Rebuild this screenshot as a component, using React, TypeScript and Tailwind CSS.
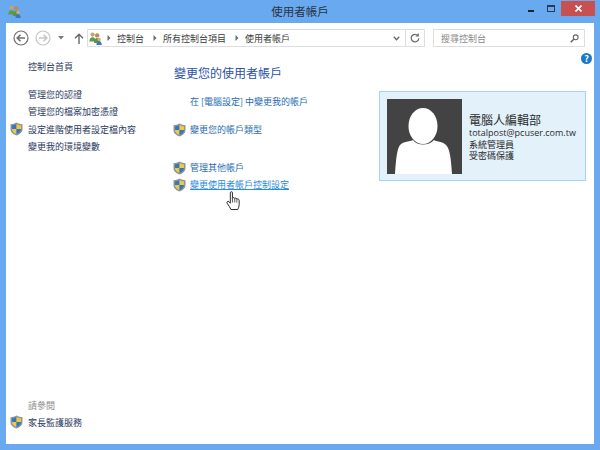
const cjk = "font-['Noto_Sans_CJK_TC','Noto_Sans',sans-serif]"

function Shield() {
  return (
    <svg width="13" height="14" viewBox="0 0 13 14" className="shrink-0">
      <path d="M6.5 0.5 C8.5 1.8 10.5 2.2 12.5 2.2 L12.5 7 C12.5 10.2 9.8 12.5 6.5 13.5 C3.2 12.5 0.5 10.2 0.5 7 L0.5 2.2 C2.5 2.2 4.5 1.8 6.5 0.5 Z" fill="#8f9499" />
      <path d="M6.5 2 L6.5 7 L2 7 L2 3.4 C3.6 3.3 5.1 2.9 6.5 2 Z" fill="#2f78c4" />
      <path d="M6.5 2 C7.9 2.9 9.4 3.3 11 3.4 L11 7 L6.5 7 Z" fill="#f2c93a" />
      <path d="M2 7 L6.5 7 L6.5 12 C4 11.2 2 9.4 2 7 Z" fill="#f2c93a" />
      <path d="M6.5 7 L11 7 C11 9.4 9 11.2 6.5 12 Z" fill="#2f78c4" />
    </svg>
  )
}

function Users() {
  return (
    <svg width="13" height="13" viewBox="0 0 13 13" className="shrink-0">
      <circle cx="3.6" cy="2.6" r="2.1" fill="#c9a26b" />
      <path d="M0.4 9.5 C0.4 6.6 1.8 5.2 3.6 5.2 C5.4 5.2 6.6 6.6 6.6 9.5 Z" fill="#5c9a45" />
      <circle cx="8.2" cy="3.4" r="2.2" fill="#b98d58" />
      <path d="M5 11 C5 7.6 6.4 6 8.2 6 C10 6 11.4 7.6 11.4 11 Z" fill="#5f8f4a" />
      <circle cx="10" cy="7.4" r="1.7" fill="#d2ad7c" />
      <path d="M7.4 13 C7.4 10.6 8.6 9.2 10 9.2 C11.4 9.2 12.8 10.6 12.8 13 Z" fill="#3f78b8" />
    </svg>
  )
}

function NavCircle({ muted }: { muted?: boolean }) {
  const c = muted ? '#c6c6c6' : '#6f6f6f'
  return (
    <svg width="16" height="16" viewBox="0 0 16 16" className="shrink-0">
      <circle cx="8" cy="8" r="7" fill="none" stroke={c} strokeWidth="1.2" />
      {muted ? (
        <path d="M4 8 H11.5 M8.5 4.8 L11.8 8 L8.5 11.2" fill="none" stroke={c} strokeWidth="1.6" />
      ) : (
        <path d="M12 8 H4.5 M7.5 4.8 L4.2 8 L7.5 11.2" fill="none" stroke={c} strokeWidth="1.6" />
      )}
    </svg>
  )
}

function Chevron() {
  return (
    <svg width="4" height="6" viewBox="0 0 4 6" className="shrink-0">
      <path d="M0.5 0 L3.5 3 L0.5 6 Z" fill="#6b6b6b" />
    </svg>
  )
}

function Crumb({ text }: { text: string }) {
  return (
    <>
      <Chevron />
      <span className="ml-[6px] mr-[9px] text-[9px] leading-none text-[#3a3a3a]">{text}</span>
    </>
  )
}

function SideLink({ text, shield }: { text: string; shield?: boolean }) {
  return (
    <div className="flex h-[17.5px] items-center">
      <div className="flex w-[22px] justify-end pr-[5px]">{shield && <Shield />}</div>
      <span className="text-[9px] leading-none text-[#2b3a5e]">{text}</span>
    </div>
  )
}

function MainLink({ text, shield, underline }: { text: string; shield?: boolean; underline?: boolean }) {
  return (
    <div className="flex h-[17px] items-center">
      <div className="w-[17px]">{shield && <Shield />}</div>
      <span className={`text-[9px] leading-none ${underline ? 'text-[#2a8ae0] underline' : 'text-[#1f6cb5]'}`}>{text}</span>
    </div>
  )
}

export default function App() {
  return (
    <div className={`flex h-[450px] w-[600px] flex-col overflow-hidden bg-[#69a9ef] ${cjk}`}>
      <div className="flex h-[23px] shrink-0 items-start">
        <div className="flex-1">
          <div className="ml-[8px] mt-[5px] w-[13px]"><Users /></div>
        </div>
        <div className="pt-[3px] text-center text-[11.5px] leading-[16px] text-[#2a3342]">使用者帳戶</div>
        <div className="flex flex-1 items-start justify-end">
          <div className="mr-[13px] mt-[10px] h-[2px] w-[6px] bg-[#1a2330]" />
          <div className="mr-[6px] mt-[5px] h-[7px] w-[8px] border border-t-[2px] border-[#2a3a55]" />
          <div className="mr-[5px] mt-[1px] flex h-[15px] w-[34px] items-center justify-center bg-[#c75050]">
            <svg width="7" height="7" viewBox="0 0 7 7">
              <path d="M0.5 0.5 L6.5 6.5 M6.5 0.5 L0.5 6.5" stroke="#fff" strokeWidth="1.6" />
            </svg>
          </div>
        </div>
      </div>

      <div className="relative mx-[6px] flex h-[421px] flex-col bg-white">
        <div className="flex h-[30px] shrink-0 items-center pl-[7px]">
          <NavCircle />
          <div className="ml-[6px]"><NavCircle muted /></div>
          <svg width="6" height="4" viewBox="0 0 6 4" className="ml-[7px]"><path d="M0 0 H6 L3 3.5 Z" fill="#7a7a7a" /></svg>
          <svg width="10" height="11" viewBox="0 0 10 11" className="ml-[10px]">
            <path d="M5 11 V1.5 M1 5.2 L5 1.2 L9 5.2" fill="none" stroke="#666" strokeWidth="1.4" />
          </svg>
          <div className="ml-[3px] flex h-[18px] w-[338px] items-center border border-[#dedede] pl-[1px]">
            <Users />
            <div className="ml-[5px] flex items-center">
              <Crumb text="控制台" />
              <Crumb text="所有控制台項目" />
              <Crumb text="使用者帳戶" />
            </div>
            <svg width="7" height="5" viewBox="0 0 7 5" className="ml-auto mr-[5px]"><path d="M0.8 0.8 L3.5 3.8 L6.2 0.8" fill="none" stroke="#666" strokeWidth="1.3" /></svg>
            <div className="flex h-full w-[19px] items-center justify-center border-l border-[#dedede]">
              <svg width="10" height="10" viewBox="0 0 10 10"><path d="M7.9 2.6 A3.8 3.8 0 1 0 8.8 5.4 M8.2 0.4 V3 H5.6" fill="none" stroke="#666" strokeWidth="1.2" /></svg>
            </div>
          </div>
          <div className="ml-[8px] flex h-[18px] w-[152px] items-center justify-between border border-[#dedede] pl-[7px] pr-[5px]">
            <span className="text-[9px] leading-none text-[#8a8a8a]">搜尋控制台</span>
            <svg width="9" height="9" viewBox="0 0 9 9"><circle cx="5.7" cy="3.3" r="2.4" fill="none" stroke="#666" strokeWidth="1.1" /><path d="M4 5 L0.8 8.2" stroke="#666" strokeWidth="1.6" /></svg>
          </div>
        </div>

        <div className="flex flex-1">
          <div className="flex w-[167px] shrink-0 flex-col pb-[13px] pt-[5px]">
            <SideLink text="控制台首頁" />
            <div className="mt-[10px]">
              <SideLink text="管理您的認證" />
              <SideLink text="管理您的檔案加密憑證" />
              <SideLink shield text="設定進階使用者設定檔內容" />
              <SideLink text="變更我的環境變數" />
            </div>
            <div className="mt-auto">
              <div className="flex h-[17px] items-center pl-[22px] text-[9px] leading-none text-[#8a8a8a]">請參閱</div>
              <SideLink shield text="家長監護服務" />
            </div>
          </div>

          <div className="flex w-[206px] shrink-0 flex-col pt-[11px]">
            <h1 className="pl-[1px] text-[12px] font-normal leading-[18px] text-[#2a52a8]">變更您的使用者帳戶</h1>
            <div className="mt-[11px]"><MainLink text="在 [電腦設定] 中變更我的帳戶" /></div>
            <div className="mt-[11px]"><MainLink shield text="變更您的帳戶類型" /></div>
            <div className="mt-[21px]"><MainLink shield text="管理其他帳戶" /></div>
            <MainLink shield underline text="變更使用者帳戶控制設定" />
          </div>

          <div className="flex-1 pt-[38px]">
            <div className="flex h-[90px] w-[207px] items-center gap-[7px] border border-[#a3d5f5] bg-[#e3f1fa] pl-[7px]">
              <svg width="75" height="75" viewBox="0 0 75 75" className="shrink-0">
                <rect width="75" height="75" fill="#434343" />
                <path d="M8 75 C9 60 10 50 13 46 C17 42 22 43 26 41 C30 47 42 47 47 41 C50 43 55 42 59 46 C63 50 64 60 65 75 Z" fill="#fff" />
                <ellipse cx="36" cy="27" rx="14.5" ry="18" fill="#fff" />
              </svg>
              <div className="flex flex-col">
                <span className="text-[12px] leading-[15px] text-[#2b2b2b]">電腦人編輯部</span>
                <span className="font-['Open_Sans',sans-serif] text-[9px] leading-[12px] text-[#2b2b2b]">totalpost@pcuser.com.tw</span>
                <span className="text-[9px] leading-[11px] text-[#2b2b2b]">系統管理員</span>
                <span className="text-[9px] leading-[11px] text-[#2b2b2b]">受密碼保護</span>
              </div>
            </div>
          </div>
        </div>

        <div className="absolute right-[2px] top-[30px] flex h-[11px] w-[11px] items-center justify-center rounded-full bg-[#1b78c8] text-[9px] font-bold leading-none text-white">?</div>

        <svg width="15" height="20" viewBox="0 0 14 19" className="absolute left-[220px] top-[168px]">
          <path d="M4 1.6 C4 0.4 6 0.4 6 1.6 L6 7 C6.4 6 8 6 8.2 7.2 C8.6 6.4 10 6.6 10.2 7.8 C10.8 7.2 12.4 7.6 12.4 9 L12.4 13 C12.4 15 11.6 16 11 17.6 L4.6 17.6 C3.6 15.4 2.4 13.8 1 11.6 C0.2 10.2 1.8 9.2 2.8 10.2 L4 11.6 Z" fill="#fff" stroke="#222" strokeWidth="0.9" strokeLinejoin="round" />
          <path d="M6 7 V11 M8.2 7.2 V11 M10.2 7.8 V11" stroke="#222" strokeWidth="0.7" />
        </svg>
      </div>
    </div>
  )
}
